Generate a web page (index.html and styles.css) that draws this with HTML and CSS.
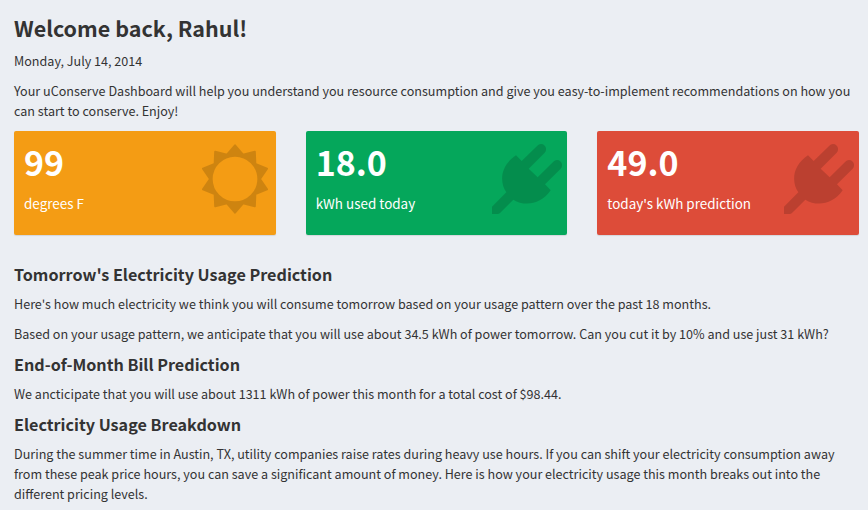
FILE: index.html
```html
<!DOCTYPE html>
<html lang="en">
<head>
<meta charset="utf-8">
<title>uConserve Dashboard</title>
<link rel="stylesheet" href="styles.css">
</head>
<body>
<svg class="defs" width="0" height="0" aria-hidden="true">
  <symbol id="plug" viewBox="0 0 210 210">
    <path d="M72 34 89 51 136 5A15 15 0 0 1 158 26L110 74 137 100 184 53A15 15 0 0 1 206 74L159 121 176 139C146 182 98 188 64 167L24 207Q21 210 17 210H0V188L43 145C21 112 26 65 72 34Z"/>
  </symbol>
  <symbol id="sun" viewBox="-105 -105 210 210">
    <path fill-rule="evenodd" stroke-width="6" stroke-linejoin="round" d="M0-101 24-73 59.500-82 61-45 96-31.200 75 0 96 31.200 61 45 59.500 82 24 73 0 101-24 73-59.500 82-61 45-96 31.200-75 0-96-31.200-61-45-59.500-82-24-73ZM0-70A70 70 0 0 0 0 70 70 70 0 0 0 0-70Z"/>
  </symbol>
</svg>
<main class="content">
  <h1>Welcome back, Rahul!</h1>
  <p>Monday, July 14, 2014</p>
  <p class="intro">Your uConserve Dashboard will help you understand you resource consumption and give you easy-to-implement recommendations on how you<br>can start to conserve. Enjoy!</p>
  <section class="cards">
    <div class="card yellow"><div><strong>99</strong><span>degrees F</span></div><svg class="icon sun"><use href="#sun"/></svg></div>
    <div class="card green"><div><strong>18.0</strong><span>kWh used today</span></div><svg class="icon"><use href="#plug"/></svg></div>
    <div class="card red"><div><strong>49.0</strong><span>today's kWh prediction</span></div><svg class="icon"><use href="#plug"/></svg></div>
  </section>
  <h2>Tomorrow's Electricity Usage Prediction</h2>
  <p>Here's how much electricity we think you will consume tomorrow based on your usage pattern over the past 18 months.</p>
  <p>Based on your usage pattern, we anticipate that you will use about 34.5 kWh of power tomorrow. Can you cut it by 10% and use just 31 kWh?</p>
  <h2>End-of-Month Bill Prediction</h2>
  <p>We ancticipate that you will use about 1311 kWh of power this month for a total cost of $98.44.</p>
  <h2>Electricity Usage Breakdown</h2>
  <p>During the summer time in Austin, TX, utility companies raise rates during heavy use hours. If you can shift your electricity consumption away<br>from these peak price hours, you can save a significant amount of money. Here is how your electricity usage this month breaks out into the<br>different pricing levels.</p>
</main>
</body>
</html>
```
FILE: styles.css
```css
* { box-sizing: border-box; }
body {
  margin: 0;
  background: #ebeef3;
  color: #333;
  font: 12.58px/20px "Noto Sans CJK SC", sans-serif;
  overflow: hidden;
}
.defs { position: absolute; }
.content { padding: 13px 9px 0 14px; white-space: nowrap; }
h1 { margin: 0 0 8px; font-size: 21.5px; line-height: 30px; }
h2 { margin: 0 0 9px; font-size: 16.17px; line-height: 21px; }
p { margin: 0 0 10px; }
.intro { margin-bottom: 10px; }
.cards { display: grid; grid-template-columns: repeat(3, 1fr); gap: 30px; margin-bottom: 29px; }
.card {
  display: flex;
  justify-content: space-between;
  height: 104px;
  padding: 13px 5px 0 10px;
  border-radius: 2px;
  box-shadow: 0 1px 1px rgba(0, 0, 0, .1);
  color: #fff;
}
.card strong { display: block; font-size: 34px; line-height: 36px; }
.card span { display: block; margin-top: 13px; font-size: 13.45px; line-height: 20px; }
.yellow { background: #f49c14; }
.green { background: #05a75b; }
.red { background: #dd4c39; }
.icon { width: 70px; height: 70px; fill: #000; stroke: #000; stroke-width: 0; opacity: .15; }
.sun { margin-right: 1px; }
```
